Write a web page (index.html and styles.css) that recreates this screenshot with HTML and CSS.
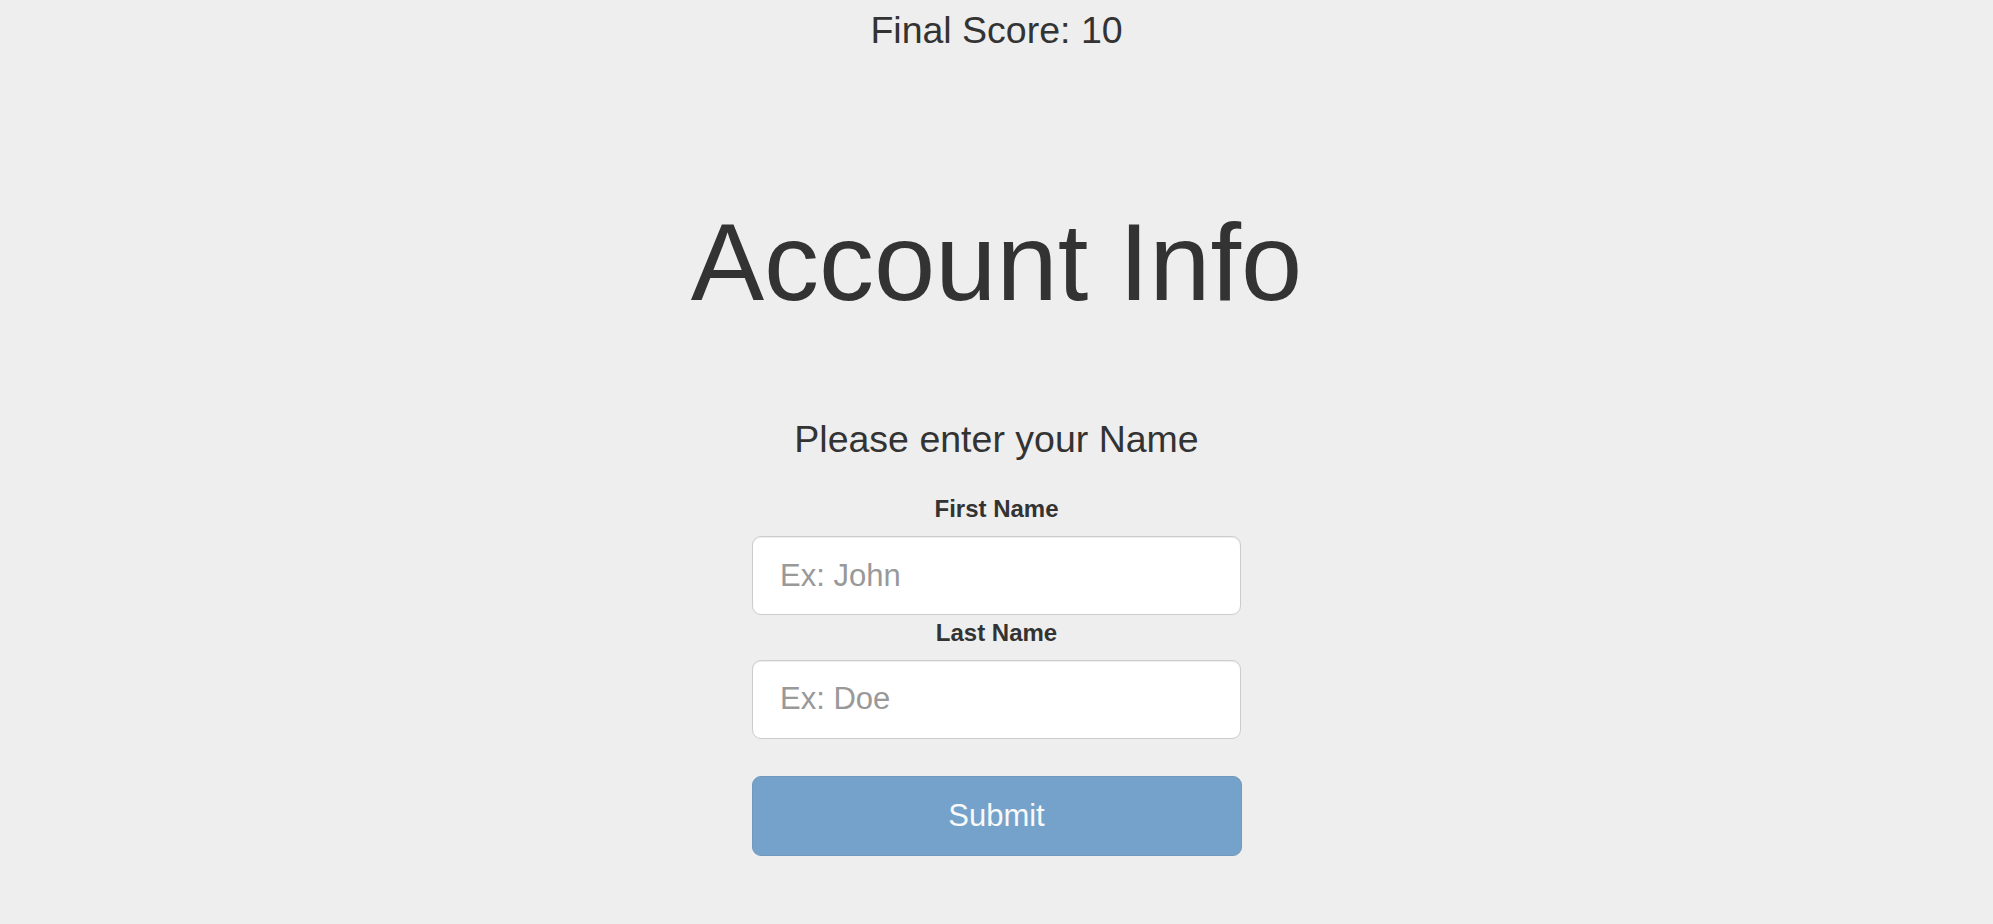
FILE: index.html
```html
<!DOCTYPE html>
<html lang="en">
<head>
<meta charset="utf-8">
<title>Account Info</title>
<link rel="stylesheet" href="styles.css">
</head>
<body>
<main class="page">
  <h3 class="score">Final Score: 10</h3>
  <h1 class="title">Account Info</h1>
  <form class="name-form">
    <h3 class="prompt">Please enter your Name</h3>
    <label class="field-label first-label" for="first">First Name</label>
    <input class="field-input first-input" id="first" type="text" placeholder="Ex: John">
    <label class="field-label last-label" for="last">Last Name</label>
    <input class="field-input last-input" id="last" type="text" placeholder="Ex: Doe">
    <button class="submit-btn" type="submit" disabled>Submit</button>
  </form>
</main>
</body>
</html>
```

FILE: styles.css
```css
html, body {
  margin: 0;
  padding: 0;
  background: #eeeeee;
}

body {
  font-family: "Liberation Sans", Arial, sans-serif;
  color: #333333;
}

.page {
  display: flex;
  flex-direction: column;
  align-items: center;
  padding-top: 7.5px;
}

.score {
  margin: 0;
  font-size: 37.5px;
  line-height: 45px;
  font-weight: normal;
}

.title {
  margin: 143.5px 0 0;
  font-size: 110px;
  line-height: 132px;
  font-weight: normal;
}

.name-form {
  display: flex;
  flex-direction: column;
  align-items: center;
  margin-top: 88.5px;
}

.prompt {
  margin: 0;
  font-size: 37.5px;
  line-height: 45px;
  font-weight: normal;
}

.field-label {
  display: block;
  font-size: 24px;
  line-height: 29px;
  font-weight: bold;
}

.first-label {
  margin-top: 32px;
}

.last-label {
  margin-top: 3px;
}

.field-input {
  box-sizing: border-box;
  width: 489px;
  height: 79px;
  padding: 0 27px;
  border: 1px solid #cccccc;
  border-radius: 9px;
  background: #ffffff;
  box-shadow: inset 0 1px 1px rgba(0, 0, 0, 0.075);
  font-family: "Liberation Sans", Arial, sans-serif;
  font-size: 31px;
  color: #555555;
  outline: none;
}

.first-input {
  margin-top: 13.5px;
}

.last-input {
  margin-top: 12.5px;
}

.field-input::placeholder {
  color: #999999;
}

.submit-btn {
  box-sizing: border-box;
  width: 490px;
  height: 80px;
  margin-top: 37px;
  border: 1px solid #2e6da4;
  border-radius: 9px;
  background: #337ab7;
  color: #ffffff;
  font-family: "Liberation Sans", Arial, sans-serif;
  font-size: 31px;
  opacity: 0.65;
  cursor: not-allowed;
}
```
